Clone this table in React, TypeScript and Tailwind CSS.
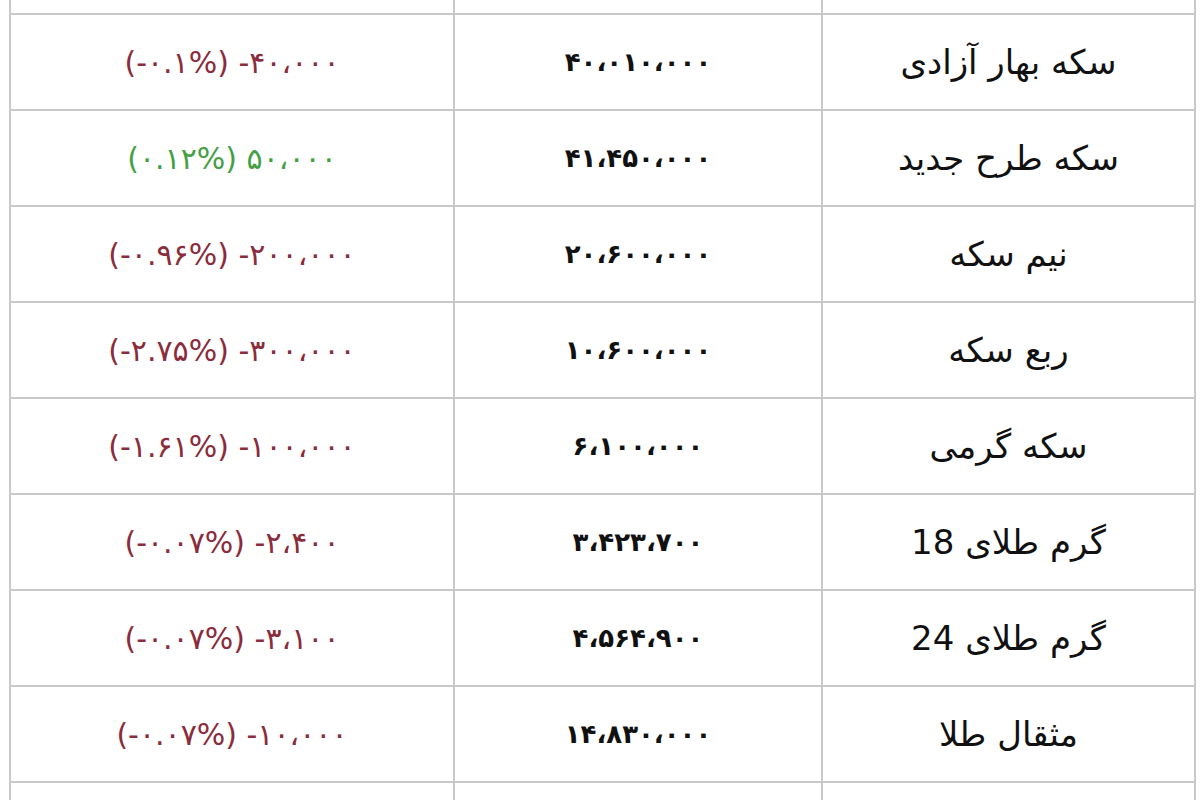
import React from "react";

type Row = { name: string; price: string; change: string; up?: boolean };

const rows: Row[] = [
  { name: "سکه بهار آزادی", price: "۴۰،۰۱۰،۰۰۰", change: "(-۰.۱%) -۴۰،۰۰۰" },
  { name: "سکه طرح جدید", price: "۴۱،۴۵۰،۰۰۰", change: "(۰.۱۲%) ۵۰،۰۰۰", up: true },
  { name: "نیم سکه", price: "۲۰،۶۰۰،۰۰۰", change: "(-۰.۹۶%) -۲۰۰،۰۰۰" },
  { name: "ربع سکه", price: "۱۰،۶۰۰،۰۰۰", change: "(-۲.۷۵%) -۳۰۰،۰۰۰" },
  { name: "سکه گرمی", price: "۶،۱۰۰،۰۰۰", change: "(-۱.۶۱%) -۱۰۰،۰۰۰" },
  { name: "گرم طلای 18", price: "۳،۴۲۳،۷۰۰", change: "(-۰.۰۷%) -۲،۴۰۰" },
  { name: "گرم طلای 24", price: "۴،۵۶۴،۹۰۰", change: "(-۰.۰۷%) -۳،۱۰۰" },
  { name: "مثقال طلا", price: "۱۴،۸۳۰،۰۰۰", change: "(-۰.۰۷%) -۱۰،۰۰۰" },
];

const font = { fontFamily: '"DejaVu Sans", "Noto Sans", sans-serif' };

export default function App() {
  return (
    <div className="w-[1200px] h-[800px] overflow-hidden bg-white pl-[9px]" style={font}>
      <div className="w-[1187px]">
        <div className="grid grid-cols-[446px_368px_373px] h-[15px] border-b-2 border-[#c9c9c9]">
          <div className="border-l-2 border-r-2 border-[#c9c9c9]" />
          <div className="border-r-2 border-[#c9c9c9]" />
          <div className="border-r-2 border-[#c9c9c9]" />
        </div>
        {rows.map((r, i) => (
          <div
            key={i}
            className="grid grid-cols-[446px_368px_373px] h-[96px] border-b-2 border-[#c9c9c9]"
          >
            <div
              className={`border-l-2 border-r-2 border-[#c9c9c9] flex items-center justify-center text-[30px] ${
                r.up ? "text-[#44a044]" : "text-[#8a2c3c]"
              }`}
            >
              <span dir="ltr" className="[unicode-bidi:bidi-override]">
                {r.change}
              </span>
            </div>
            <div className="border-r-2 border-[#c9c9c9] flex items-center justify-center text-[26px] font-bold text-[#111]">
              <span dir="ltr" className="[unicode-bidi:bidi-override]">
                {r.price}
              </span>
            </div>
            <div
              dir="rtl"
              className="border-r-2 border-[#c9c9c9] flex items-center justify-center text-[34px] text-[#111]"
            >
              {r.name}
            </div>
          </div>
        ))}
        <div className="grid grid-cols-[446px_368px_373px] h-[40px]">
          <div className="border-l-2 border-r-2 border-[#c9c9c9]" />
          <div className="border-r-2 border-[#c9c9c9]" />
          <div className="border-r-2 border-[#c9c9c9]" />
        </div>
      </div>
    </div>
  );
}
